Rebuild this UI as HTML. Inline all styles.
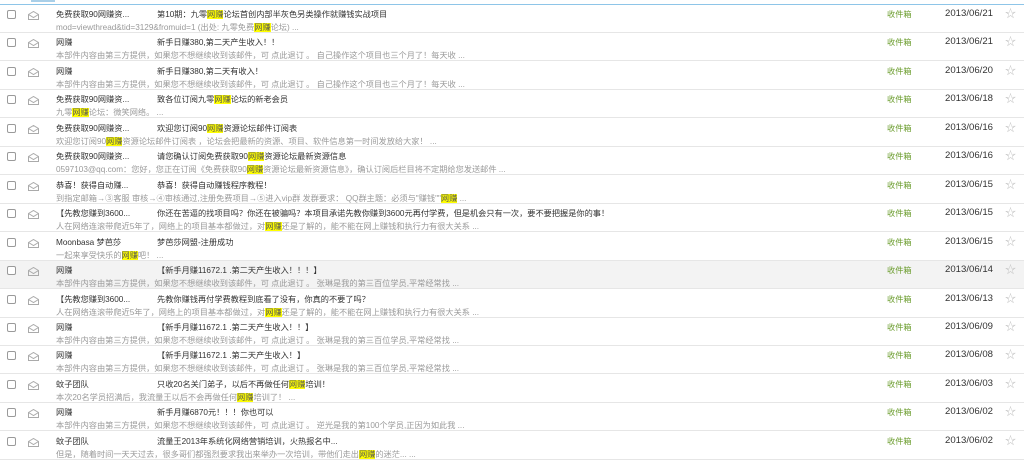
<!DOCTYPE html>
<html><head><meta charset="utf-8"><style>
*{margin:0;padding:0;box-sizing:border-box}
body{width:1024px;height:457px;overflow:hidden;background:#fff;font-family:"Liberation Sans","Noto Sans CJK SC",sans-serif;font-size:8.2px;color:#333;position:relative}
.top{position:absolute;left:0;top:4px;width:1024px;height:1px;background:#8ec5e8}
.tab{position:absolute;left:31px;top:0;width:24px;height:2px;background:#a9cfe8}
.row{position:absolute;left:0;width:1024px;height:28px;border-bottom:1px solid #e6e6e6}
.row.hl{background:#f3f3f3}
.cb{position:absolute;left:7px;top:5px;width:9px;height:9px;border:1px solid #9a9a9a;border-radius:2px;background:#fff}
.env{position:absolute;left:28px;top:6px}
.snd{position:absolute;left:56px;top:3px;white-space:nowrap}
.sub{position:absolute;left:157px;top:3px;white-space:nowrap}
.pre{position:absolute;left:56px;top:16px;white-space:nowrap;color:#9a9a9a}
.fld{position:absolute;left:887px;top:3px;color:#6a9c2c}
.dt{position:absolute;left:945px;top:3px;font-size:9.6px;color:#333}
.st{position:absolute;left:1005px;top:4px;font-size:11px;color:#c4c4c4;line-height:11px}
b{font-weight:normal;background:#ff0;color:#555}
</style></head><body>
<div class="tab"></div><div class="top"></div>
<script>
const env='<svg class="env" width="11" height="9" viewBox="0 0 11 9"><path d="M0.5 3.5L5.5 0.5L10.5 3.5V8.5H0.5Z M0.5 3.5L5.5 6.5L10.5 3.5" fill="none" stroke="#aaa" stroke-width="1"/></svg>';
const H='<b>网赚</b>';
const P1='本部件内容由第三方提供，如果您不想继续收到该邮件，可 点此退订 。 ';
const P2='人在网络连滚带爬近5年了，网络上的项目基本都做过，对'+H+'还是了解的，能不能在网上赚钱和执行力有很大关系 ...';
const rows=[
['免费获取90网赚资...','第10期：九零'+H+'论坛首创内部半灰色另类操作就赚钱实战项目','mod=viewthread&amp;tid=3129&amp;fromuid=1 (出处: 九零免费'+H+'论坛) ...','2013/06/21'],
['网赚','新手日赚380,第二天产生收入！！',P1+' 自己操作这个项目也三个月了！每天收 ...','2013/06/21'],
['网赚','新手日赚380,第二天有收入！',P1+' 自己操作这个项目也三个月了！每天收 ...','2013/06/20'],
['免费获取90网赚资...','致各位订阅九零'+H+'论坛的新老会员','九零'+H+'论坛：微笑网络。 ...','2013/06/18'],
['免费获取90网赚资...','欢迎您订阅90'+H+'资源论坛邮件订阅表','欢迎您订阅90'+H+'资源论坛邮件订阅表 ，论坛会把最新的资源、项目、软件信息第一时间发放给大家！ ...','2013/06/16'],
['免费获取90网赚资...','请您确认订阅免费获取90'+H+'资源论坛最新资源信息','0597103@qq.com：您好，您正在订阅《免费获取90'+H+'资源论坛最新资源信息》，确认订阅后栏目将不定期给您发送邮件 ...','2013/06/16'],
['恭喜！获得自动赚...','恭喜！获得自动赚钱程序教程！','到指定邮箱→③客服 审核→④审核通过,注册免费项目→⑤进入vip群 发群要求： QQ群主题：必须与"赚钱""'+H+' ...','2013/06/15'],
['【先教您赚到3600...','你还在苦逼的找项目吗？你还在被骗吗？本项目承诺先教你赚到3600元再付学费，但是机会只有一次，要不要把握是你的事！',P2,'2013/06/15'],
['Moonbasa 梦芭莎','梦芭莎网盟-注册成功','一起来享受快乐的'+H+'吧！ ...','2013/06/15'],
['网赚','【新手月赚11672.1 .第二天产生收入！！！】',P1+' 张琳是我的第三百位学员,平常经常找 ...','2013/06/14'],
['【先教您赚到3600...','先教你赚钱再付学费教程到底看了没有，你真的不要了吗？',P2,'2013/06/13'],
['网赚','【新手月赚11672.1 .第二天产生收入！！】',P1+' 张琳是我的第三百位学员,平常经常找 ...','2013/06/09'],
['网赚','【新手月赚11672.1 .第二天产生收入！】',P1+' 张琳是我的第三百位学员,平常经常找 ...','2013/06/08'],
['蚊子团队','只收20名关门弟子，以后不再做任何'+H+'培训！','本次20名学员招满后，我流量王以后不会再做任何'+H+'培训了！ ...','2013/06/03'],
['网赚','新手月赚6870元！！！你也可以',P1+' 逆光是我的第100个学员,正因为如此我 ...','2013/06/02'],
['蚊子团队','流量王2013年系统化网络营销培训，火热报名中...','但是，随着时间一天天过去，很多哥们都强烈要求我出来举办一次培训，带他们走出'+H+'的迷茫... ...','2013/06/02']
];
let h='';
rows.forEach((r,i)=>{
 const top=Math.round(5+i*28.45);
 h+='<div class="row'+(i==9?' hl':'')+'" style="top:'+top+'px"><div class="cb"></div>'+env+
 '<div class="snd">'+r[0]+'</div><div class="sub">'+r[1]+'</div><div class="pre">'+r[2]+'</div>'+
 '<div class="fld">收件箱</div><div class="dt">'+r[3]+'</div><div class="st">☆</div></div>';
});
document.write(h);
</script>
</body></html>
